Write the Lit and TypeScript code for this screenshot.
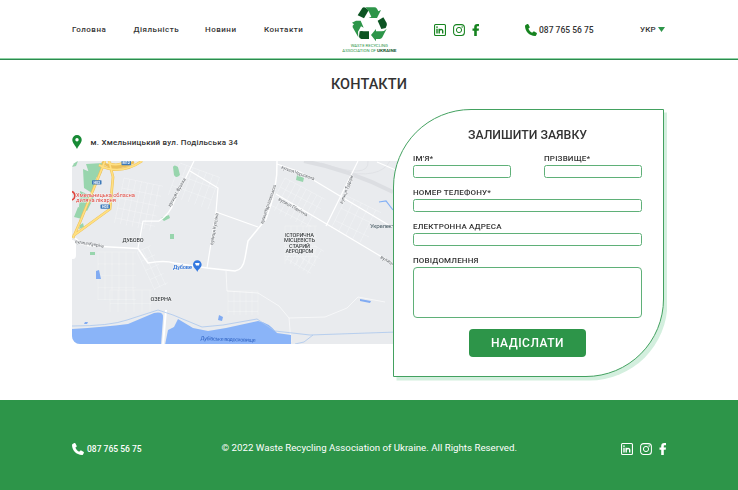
import { LitElement, html, css, svg } from "lit";
import { customElement, property } from "lit/decorators.js";

const linkedin = html`<svg width="12" height="12" viewBox="0 0 12 12" fill="none" stroke="currentColor">
  <rect x=".55" y=".55" width="10.9" height="10.9" rx="1" stroke-width="1.1"/>
  <path d="M3 4.8V9.6M5.2 9.6V4.8M5.2 7C5.2 5.4 8.7 4.6 8.7 7V9.6" stroke-width="1.4"/>
  <circle cx="3" cy="3.1" r=".85" fill="currentColor" stroke="none"/></svg>`;
const instagram = html`<svg width="12" height="12" viewBox="0 0 12 12" fill="none" stroke="currentColor">
  <rect x=".6" y=".6" width="10.8" height="10.8" rx="3" stroke-width="1.05"/>
  <circle cx="6" cy="6" r="2.6" stroke-width="1"/>
  <circle cx="9.1" cy="2.9" r=".75" fill="currentColor" stroke="none"/></svg>`;
const facebook = html`<svg width="8" height="12" viewBox="0 0 8 12" fill="currentColor">
  <path d="M2.2 12V6.8H.5V4.4H2.2V3.1C2.2 1 3.3 0 5.2 0H7V2.2H5.8C5 2.2 4.8 2.6 4.8 3.2V4.4H7L6.7 6.8H4.8V12Z"/></svg>`;
const phone = html`<svg width="12" height="12" viewBox="0 0 12 12" fill="currentColor">
  <path d="M.6 1.1 2.3.1C2.8-.1 3.2.1 3.5.6L4.6 2.7C4.8 3.2 4.7 3.6 4.3 3.9L3.4 4.6C4 6.4 5.3 7.9 7.2 8.8L8.1 7.8C8.5 7.4 8.9 7.4 9.3 7.6L11.4 8.7C11.9 9 12 9.4 11.8 9.9L11 11.4C10.8 11.8 10.4 12 10 12C4.3 11.8.1 7.3 0 2C0 1.6.2 1.3.6 1.1Z"/></svg>`;

@customElement("social-links")
class SocialLinks extends LitElement {
  static styles = css`
    :host { display: flex; gap: 7px; height: 12px; }
    svg { display: block; }
  `;
  render() { return html`${linkedin}${instagram}${facebook}`; }
}

@customElement("brand-logo")
class BrandLogo extends LitElement {
  static styles = css`
    :host { display: block; height: 48px; }
    svg { display: block; }
    text { font-family: Roboto, "Liberation Sans", sans-serif; font-size: 13px; font-weight: 400; fill: #2d9549; }
    .strong { font-weight: 700; fill: #14582c; }
  `;
  render() {
    return html`<svg width="55" height="48" viewBox="66 18 165 144">
      <g fill="#0c5422">
        <path d="M113 46 127 24Q130 20 137 23L146 31 132 55Z"/>
        <path d="M173 62 190 52 200 69Q203 76 197 84L184 87Z"/>
        <path d="M119 94Q125 92 131 94H147V117H124Q117 116 117 109Z"/>
      </g>
      <g fill="#2d9549">
        <path d="M137 22H163Q168 22 171 26L175 34 183 30 171 54H146L154 50 146 34Z"/>
        <path d="M96 68 108 62H122L131 83 123 79 114 95 115 112 98 82Q96 78 102 73Z"/>
        <path d="M153 105 168 87V94H185Q193 94 200 86L187 112Q184 117 179 117H168V124Z"/>
      </g>
      <text x="92" y="142" textLength="112" lengthAdjust="spacingAndGlyphs">WASTE RECYCLING</text>
      <text x="67" y="155" textLength="101" lengthAdjust="spacingAndGlyphs">ASSOCIATION OF</text>
      <text class="strong" x="171" y="155" textLength="58" lengthAdjust="spacingAndGlyphs">UKRAINE</text>
    </svg>`;
  }
}

@customElement("city-map")
class CityMap extends LitElement {
  static styles = css`
    :host { display: block; width: 340px; height: 183.5px; border-radius: 8px; overflow: hidden; background: #e9ebee; }
    svg { display: block; }
    text { font-family: Roboto, "Liberation Sans", sans-serif; font-size: 6px; font-weight: 400; fill: #3c4043; }
    .halo { stroke: #f4f5f6; stroke-width: .8px; paint-order: stroke; }
    .district { font-size: 5.6px; font-weight: 500; text-anchor: middle; }
    .street { font-size: 4.7px; fill: #63676c; }
    .badge { font-size: 3.6px; fill: #fff; font-weight: 700; text-anchor: middle; }
    .clinic { font-size: 5.8px; fill: #e0463e; }
    .place { font-size: 6.2px; fill: #2a6fd6; font-weight: 500; }
    .water { font-size: 5.3px; fill: #2b5fc0; }
    .park { font-size: 6.2px; fill: #50626b; }
  `;
  private grid(x: number, y: number, w: number, h: number, step: number, angle: number) {
    const lines = [];
    for (let i = 0; i <= w; i += step) lines.push(svg`<path d="M${x + i} ${y}v${h}"/>`);
    for (let j = 0; j <= h; j += step * 1.7) lines.push(svg`<path d="M${x} ${y + j}h${w}"/>`);
    return svg`<g transform="rotate(${angle} ${x} ${y})">${lines}</g>`;
  }
  private badge(x: number, y: number, label: string) {
    return svg`<rect x=${x} y=${y} width="9.500" height="4.200" rx=".6" fill="#3c79b8"/>
      <text class="badge" x=${x + 4.75} y=${y + 3.4}>${label}</text>`;
  }
  render() {
    return html`<svg width="340" height="184" viewBox="72 161 340 184">
      <g stroke="#f5f6f7" stroke-width=".5" fill="none" opacity=".85">
        ${this.grid(124, 178, 40, 46, 6, 12)}
        ${this.grid(180, 163, 42, 34, 7, 20)}
        ${this.grid(285, 178, 46, 34, 6, 28)}
        ${this.grid(347, 196, 38, 36, 8, 26)}
        ${this.grid(98, 252, 38, 48, 7, 0)}
        ${this.grid(137, 252, 15, 42, 6, -25)}
        ${this.grid(110, 290, 42, 22, 8, 0)}
        ${this.grid(285, 226, 32, 38, 6, 0)}
        ${this.grid(228, 291, 30, 24, 6, 0)}
        ${this.grid(300, 237, 28, 28, 5, 31)}
      </g>
      <g fill="none" stroke="#dcdee2">
        <path d="M304 161Q350 170 393 192" stroke-width="4"/>
        <path d="M321 163Q370 180 368 161M340 171Q380 180 390 161" stroke-width=".7"/>
      </g>
      <g fill="#98d5ad">
        <path d="M72 161H78L76 166 72 167ZM86 164 103 163 101 174 96 178 90 176ZM83 169 97 175 92 193 84 188ZM80 191 94 197 87 211 79 207ZM78 207 86 209 82 219 74 217ZM80 225 83 223 84 227 79 229Z"/>
        <path d="M173 167Q174 164 178 167L180 175Q176 179 174 175ZM161 218 169 215 170 218 164 221ZM170 234H174V239H170ZM90 252H95V255H90ZM297 175 304 178 303 182 296 180Z"/>
      </g>
      <g fill="none" stroke="#fff" stroke-linejoin="round">
        <path d="M75 238Q83 246 92 246L138 248.500 148 263Q165 260 174 263L207 268 235 271Q243 270 245 258L248 241 266 219Q278 188 277 161" stroke-width="1.500"/>
        <path d="M138 248 143 221 159 221Q170 214 174 202L194 161M190 171 218 188 216 212 207 268M216 212 258 227M277 164 300 172 340 196 392 227M276 194 330 226 397 266M358 161 326 226M377 162 398 171" stroke-width="1.250"/>
        <path d="M226 271 227 291 258 293 279 306 289 318 325 317 347 308 358 297 385 302M289 318 291 342" stroke-width=".6"/>
        <path d="M166 310 163 345" stroke-width="2"/>
      </g>
      <g fill="none" stroke-linejoin="round">
        <path d="M73 238 80 222 105 161M73 236 110 209 113 177 109 161M99 165Q120 176 142 161M102 162Q115 172 134 162M108 163Q117 167 125 162" stroke="#ecc05a" stroke-width="2.700"/>
        <path d="M73 238 80 222 105 161M73 236 110 209 113 177 109 161M99 165Q120 176 142 161M108 163Q117 167 125 162" stroke="#ffe082" stroke-width="1.600"/>
      </g>
      <path d="M72 329Q104 327 128 324L154 313Q164 311 163 318L161 345H72ZM165 345 168 330 174 327 178 319 193 328 208 331 226 328 258 321Q268 322 277 333L291 335V345Z" fill="#8ab4f8"/>
      <path d="M72 326Q110 326 127 320L158 310 173 315 202 327 223 325 257 319 275 331 310 335 397 332M313 335 304 342 295 344" fill="none" stroke="#a9c7ee" stroke-width=".8"/>
      <path d="M96 271 99 270 101 279 96 279ZM219 315 223 317 222 321 218 320ZM360 299 371 301 370 303 360 301ZM85 322 88 322 87 324 84 324Z" fill="#81abf2"/>
      <path d="M379 202 386 201 393 210" fill="none" stroke="#83b0f5" stroke-width="1.200"/>
      ${this.badge(121.500, 161, "М12")}${this.badge(92, 180.200, "Н03")}${this.badge(100.500, 204.500, "Н03")}
      <path d="M69 191.500A4.600 4.600 0 0 1 69 200" fill="none" stroke="#e0463e" stroke-width="1.500" transform="translate(3)"/>
      <path d="M69 240H73Q76 241 76 244V255Q76 259 73 259H69Z" fill="#fff"/>
      <text class="clinic halo" x="76" y="196.500" textLength="59">Хмельницька обласна</text>
      <text class="clinic halo" x="76" y="202" textLength="40">дитяча лікарня</text>
      <text class="district halo" x="133" y="241.500" textLength="21">ДУБОВО</text>
      <text class="district halo" x="161" y="301.300" textLength="21">ОЗЕРНА</text>
      <g class="halo">
        <text class="district" x="299.500" y="236.600" textLength="29">ІСТОРИЧНА</text>
        <text class="district" x="299.500" y="242" textLength="31">МІСЦЕВІСТЬ</text>
        <text class="district" x="299.500" y="247.500" textLength="21">СТАРИЙ</text>
        <text class="district" x="299.500" y="253" textLength="28">АЕРОДРОМ</text>
      </g>
      <text class="place halo" x="173" y="268.500" textLength="19">Дубове</text>
      <path d="M197.300 272C196.500 269 193 268 193 264.500A4.300 4.300 0 0 1 201.600 264.500C201.600 268 198 269 197.300 272Z" fill="#3478df"/>
      <path d="M195 263H199.500L199 265.500H196Z" fill="#fff"/>
      <text class="water" x="200.500" y="340" textLength="55" transform="rotate(2 200 340)">Дубівське водосховище</text>
      <text class="park" x="370" y="227.500" textLength="31">Укрелектро</text>
      <text class="street halo" textLength="32" transform="translate(170.500 207) rotate(-61)">вулиця І. Франка</text>
      <text class="street halo" textLength="32" transform="translate(213 245) rotate(-80)">вулиця Купріна</text>
      <text class="street halo" textLength="41" transform="translate(263 224) rotate(-71)">вулиця Курчатовського</text>
      <text class="street halo" textLength="35" transform="translate(281 168.500) rotate(20)">вулиця Чорновола</text>
      <text class="street halo" textLength="33" transform="translate(278 200) rotate(30)">вулиця Північна</text>
      <text class="street halo" textLength="30" transform="translate(342.500 204) rotate(-69)">вулиця Тудори</text>
      <text class="street halo" textLength="29" transform="translate(75 243) rotate(9)">вулиця Купріна</text>
      <text class="street halo" textLength="16" transform="translate(380 258) rotate(30)">вулиця</text>
    </svg>`;
  }
}

@customElement("form-field")
class FormField extends LitElement {
  @property() label = "";
  @property({ type: Boolean }) multiline = false;
  static styles = css`
    :host { display: block; flex: 1; }
    .label { display: block; height: 12px; font-size: 8px; line-height: 12px; font-weight: 500; letter-spacing: .18px; }
    .control { display: block; box-sizing: border-box; width: 100%; height: 13px; margin: 0; border: 1px solid #5fb078; border-radius: 2.500px; background: #fff; outline: 0; padding: 0 4px; resize: none; font: 8px Roboto, sans-serif; }
    .area { height: 51px; border-radius: 4px; }
  `;
  render() {
    return html`<label><span class="label">${this.label}</span>
      ${this.multiline ? html`<textarea class="control area"></textarea>` : html`<input class="control">`}</label>`;
  }
}

@customElement("app-root")
class AppRoot extends LitElement {
  static styles = css`
    :host { display: flex; flex-direction: column; height: 490px; background: #fff; color: #333; font-family: Roboto, "Liberation Sans", sans-serif; font-weight: 500; white-space: nowrap; overflow: hidden; }
    svg { display: block; }
    .header { box-sizing: border-box; height: 60px; padding: 0 72px; display: grid; grid-template-columns: 270px 92px 91px 115px auto; align-items: center; border-bottom: 1px solid #2d8a50; box-shadow: inset 0 -1px #8ed3a4; }
    .nav { display: flex; font-size: 8px; letter-spacing: .5px; }
    .n1 { width: 61.500px; } .n2 { width: 71.500px; } .n3 { width: 59px; }
    .green { color: #16831f; }
    .phone { display: flex; align-items: center; gap: 2px; font-size: 8.500px; letter-spacing: 0; }
    .lang { display: flex; align-items: center; gap: 2px; font-size: 8px; letter-spacing: .1px; }
    .title { margin: 0; padding-top: 15px; height: 35px; box-sizing: border-box; line-height: 20px; font-size: 14.500px; font-weight: 500; text-align: center; letter-spacing: .1px; }
    .main { flex: none; height: 305px; padding-left: 72px; display: flex; align-items: flex-start; }
    .place { width: 340px; margin-right: -19.500px; padding-top: 39px; }
    .address { display: flex; gap: 8.500px; align-items: center; height: 16px; margin-bottom: 10.500px; font-size: 8px; letter-spacing: .23px; }
    .card { position: relative; box-sizing: border-box; width: 271px; height: 268px; margin-top: 14px; padding: 16.500px 20.500px 0 19.500px; background: #fff; border: 1.500px solid #43a160; border-radius: 78px 0 78px 0; box-shadow: 3.500px 3.500px 0 #d3efde; }
    .card-title { margin: 0 0 10.500px; line-height: 16px; font-size: 12.300px; font-weight: 500; text-align: center; }
    .fields { display: flex; flex-direction: column; gap: 9px; }
    .pair { display: flex; gap: 33px; }
    .submit { display: block; width: 117px; height: 28px; margin: 11px auto 0; border: 0; padding: 0; border-radius: 4px; background: #2d9549; color: #fff; font: 500 12px Roboto, "Liberation Sans", sans-serif; letter-spacing: .5px; }
    .footer { height: 90px; box-sizing: border-box; padding: 8px 71px 0 72px; display: grid; grid-template-columns: 149.500px 1fr auto; align-items: center; background: #2d9549; color: #fff; }
    .footer .phone { gap: 3px; }
    .copy { padding-bottom: 3px; font-size: 9.700px; font-weight: 400; letter-spacing: .01px; }
  `;
  render() {
    return html`
      <header class="header">
        <nav class="nav"><span class="n1">Головна</span><span class="n2">Діяльність</span><span class="n3">Новини</span><span>Контакти</span></nav>
        <brand-logo></brand-logo>
        <social-links class="green"></social-links>
        <div class="phone"><span class="green">${phone}</span>087 765 56 75</div>
        <div class="lang">УКР<svg width="7" height="5" viewBox="0 0 7 5"><path d="M0 0H7L3.500 5Z" fill="#2d9549"/></svg></div>
      </header>
      <h1 class="title">КОНТАКТИ</h1>
      <main class="main">
        <section class="place">
          <div class="address"><svg width="10" height="14" viewBox="0 0 10 14"><path d="M5 0A4.700 4.700 0 0 1 9.700 4.700C9.700 8 6.500 10.500 5 14C3.500 10.500.3 8 .3 4.700A4.700 4.700 0 0 1 5 0ZM5 3A1.700 1.700 0 1 0 5 6.400 1.700 1.700 0 1 0 5 3Z" fill="#178a35"/></svg>м. Хмельницький вул. Подільська 34</div>
          <city-map></city-map>
        </section>
        <form class="card">
          <h2 class="card-title">ЗАЛИШИТИ ЗАЯВКУ</h2>
          <div class="fields">
            <div class="pair"><form-field label="ІМ’Я*"></form-field><form-field label="ПРІЗВИЩЕ*"></form-field></div>
            <form-field label="НОМЕР ТЕЛЕФОНУ*"></form-field>
            <form-field label="ЕЛЕКТРОННА АДРЕСА"></form-field>
            <form-field label="ПОВІДОМЛЕННЯ" multiline></form-field>
          </div>
          <button class="submit" type="button">НАДІСЛАТИ</button>
        </form>
      </main>
      <footer class="footer">
        <div class="phone">${phone}087 765 56 75</div>
        <div class="copy">© 2022 Waste Recycling Association of Ukraine. All Rights Reserved.</div>
        <social-links></social-links>
      </footer>`;
  }
}
